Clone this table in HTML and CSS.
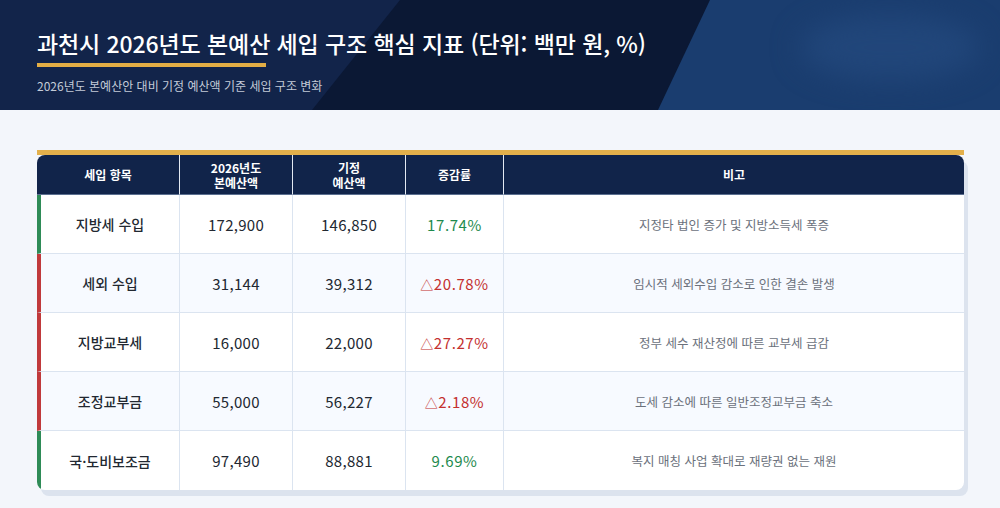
FILE: index.html
```html
<!DOCTYPE html>
<html lang="ko">
<head>
<meta charset="utf-8">
<link rel="stylesheet" href="styles.css">
</head>
<body>
<header class="hero">
  <div class="hero-dark"></div>
  <div class="hero-light"><div class="glow"></div></div>
  <div class="hero-text">
    <h1 class="title">과천시 2026년도 본예산 세입 구조 핵심 지표 (단위: 백만 원, %)</h1>
    <div class="title-bar"></div>
    <p class="subtitle">2026년도 본예산안 대비 기정 예산액 기준 세입 구조 변화</p>
  </div>
</header>
<main class="content">
  <div class="card-wrap">
    <table class="grid">
      <colgroup>
        <col class="c1"><col class="c2"><col class="c3"><col class="c4"><col class="c5">
      </colgroup>
      <thead>
        <tr>
          <th>세입 항목</th>
          <th>2026년도<br>본예산액</th>
          <th>기정<br>예산액</th>
          <th>증감률</th>
          <th>비고</th>
        </tr>
      </thead>
      <tbody>
        <tr class="up">
          <td class="name">지방세 수입</td><td class="num">172,900</td><td class="num">146,850</td><td class="rate pos">17.74%</td><td class="note">지정타 법인 증가 및 지방소득세 폭증</td>
        </tr>
        <tr class="down alt">
          <td class="name">세외 수입</td><td class="num">31,144</td><td class="num">39,312</td><td class="rate neg"><span class="tri">△</span>20.78%</td><td class="note">임시적 세외수입 감소로 인한 결손 발생</td>
        </tr>
        <tr class="down">
          <td class="name">지방교부세</td><td class="num">16,000</td><td class="num">22,000</td><td class="rate neg"><span class="tri">△</span>27.27%</td><td class="note">정부 세수 재산정에 따른 교부세 급감</td>
        </tr>
        <tr class="down alt">
          <td class="name">조정교부금</td><td class="num">55,000</td><td class="num">56,227</td><td class="rate neg"><span class="tri">△</span>2.18%</td><td class="note">도세 감소에 따른 일반조정교부금 축소</td>
        </tr>
        <tr class="up last">
          <td class="name">국·도비보조금</td><td class="num">97,490</td><td class="num">88,881</td><td class="rate pos">9.69%</td><td class="note">복지 매칭 사업 확대로 재량권 없는 재원</td>
        </tr>
      </tbody>
    </table>
  </div>
</main>
</body>
</html>
```

FILE: styles.css
```css
* { box-sizing: border-box; }
html, body { margin: 0; padding: 0; }
body {
  background: #f3f6fb;
  font-family: "Noto Sans CJK KR", "Noto Sans", sans-serif;
  width: 1000px;
  height: 508px;
  overflow: hidden;
}
.hero {
  position: relative;
  height: 110px;
  background: #12244a;
  overflow: hidden;
}
.hero-dark {
  position: absolute;
  inset: 0;
  background: #0b1834;
  clip-path: polygon(400px 0, 1000px 0, 1000px 110px, 312px 110px);
}
.hero-light {
  position: absolute;
  inset: 0;
  background: #1a3d6f;
  clip-path: polygon(710px 0, 1000px 0, 1000px 110px, 658px 110px);
}
.glow {
  position: absolute;
  left: 800px;
  top: 15px;
  width: 180px;
  height: 65px;
  border-radius: 50%;
  background: #21467a;
  filter: blur(14px);
}
.hero-text {
  position: relative;
  padding: 27px 0 0 37px;
}
.title {
  margin: 0;
  color: #ffffff;
  font-size: 23px;
  font-weight: 500;
  line-height: 32px;
  letter-spacing: -0.1px;
}
.title-bar {
  width: 229px;
  height: 4px;
  background: #e3ae45;
  margin-top: 4px;
}
.subtitle {
  margin: 10px 0 0;
  color: #c3cbd8;
  font-size: 12px;
  line-height: 18px;
}
.content {
  padding: 40px 36px 0 37px;
}
.card-wrap {
  width: 927px;
  border-top: 5px solid #e3b04b;
}
.grid {
  width: 927px;
  border-collapse: separate;
  border-spacing: 0;
  table-layout: fixed;
  border-radius: 8px;
  box-shadow: 4px 6px 0 #dce3ee;
  overflow: hidden;
  background: #ffffff;
}
.c1 { width: 142px; }
.c2 { width: 113px; }
.c3 { width: 113px; }
.c4 { width: 98px; }
.c5 { width: 461px; }
thead th {
  background: #11244a;
  color: #ffffff;
  font-size: 12px;
  font-weight: 700;
  line-height: 15px;
  height: 40px;
  padding: 0;
  text-align: center;
  border-left: 1px solid #e3e9f2;
  border-bottom: 1px solid #5b6f90;
}
thead th:first-child { border-left: none; }
tbody td {
  height: 59px;
  padding: 0;
  text-align: center;
  border-left: 1px solid #dbe4f0;
  border-bottom: 1px solid #dbe4f0;
  color: #222831;
  font-size: 15px;
}
tbody tr.last td { border-bottom: none; }
tbody tr.alt td { background: #f7faff; }
tbody td.name {
  border-left: 4px solid #2e8b57;
  font-size: 14px;
  font-weight: 500;
}
tbody tr.down td.name { border-left-color: #c0393b; }
.num { letter-spacing: 0.3px; }
.rate { letter-spacing: 0.6px; }
.tri { font-size: 13px; letter-spacing: 0.5px; }
.pos { color: #1e8a4e !important; }
.neg { color: #c4302f !important; }
.note {
  color: #6b717c !important;
  font-size: 12.5px !important;
}
```
